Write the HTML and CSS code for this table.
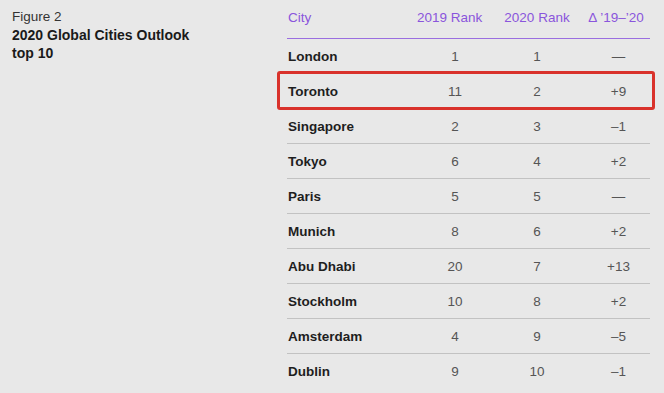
FILE: index.html
```html
<!DOCTYPE html>
<html>
<head>
<meta charset="utf-8">
<link rel="stylesheet" href="styles.css">
</head>
<body>
<div class="page">
  <div class="caption">
    <div class="fig">Figure 2</div>
    <div class="title">2020 Global Cities Outlook<br>top 10</div>
  </div>
  <div class="table">
    <div class="row head">
      <div class="city">City</div>
      <div class="c1">2019 Rank</div>
      <div class="c2">2020 Rank</div>
      <div class="c3">Δ ’19–’20</div>
    </div>
    <div class="row"><div class="city">London</div><div class="c1">1</div><div class="c2">1</div><div class="c3">—</div></div>
    <div class="row hl"><div class="city">Toronto</div><div class="c1">11</div><div class="c2">2</div><div class="c3">+9</div></div>
    <div class="row"><div class="city">Singapore</div><div class="c1">2</div><div class="c2">3</div><div class="c3">–1</div></div>
    <div class="row"><div class="city">Tokyo</div><div class="c1">6</div><div class="c2">4</div><div class="c3">+2</div></div>
    <div class="row"><div class="city">Paris</div><div class="c1">5</div><div class="c2">5</div><div class="c3">—</div></div>
    <div class="row"><div class="city">Munich</div><div class="c1">8</div><div class="c2">6</div><div class="c3">+2</div></div>
    <div class="row"><div class="city">Abu Dhabi</div><div class="c1">20</div><div class="c2">7</div><div class="c3">+13</div></div>
    <div class="row"><div class="city">Stockholm</div><div class="c1">10</div><div class="c2">8</div><div class="c3">+2</div></div>
    <div class="row"><div class="city">Amsterdam</div><div class="c1">4</div><div class="c2">9</div><div class="c3">–5</div></div>
    <div class="row last"><div class="city">Dublin</div><div class="c1">9</div><div class="c2">10</div><div class="c3">–1</div></div>
  </div>
</div>
</body>
</html>
```
FILE: styles.css
```css
html, body {
  margin: 0;
  padding: 0;
  background: #e8e8e8;
  width: 664px;
  height: 393px;
  overflow: hidden;
  font-family: "Liberation Sans", Arial, sans-serif;
}
.page {
  display: flex;
  height: 393px;
}
.caption {
  width: 275px;
  padding: 8px 0 0 12px;
  box-sizing: border-box;
}
.fig {
  font-size: 13.5px;
  line-height: 18px;
  color: #333;
}
.title {
  font-size: 14px;
  line-height: 18px;
  font-weight: 700;
  color: #1a1a1a;
}
.table {
  margin-left: 12px;
  width: 363px;
  display: flex;
  flex-direction: column;
}
.row {
  display: grid;
  grid-template-columns: 130px 76px 88px 69px;
  height: 34px;
  align-items: center;
  border-bottom: 1px solid #c2c2c2;
  position: relative;
  font-size: 13.5px;
  color: #555;
}
.row.head {
  height: 39px;
  box-sizing: border-box;
  padding-bottom: 3px;
  border-bottom: 1.5px solid #9a6ee0;
  color: #8a55dc;
}
.city {
  padding-left: 1px;
  font-weight: 700;
  color: #1e1e1e;
}
.row.head .city {
  font-weight: 400;
  color: #8a55dc;
}
.c1, .c2, .c3 {
  text-align: center;
}
.c3 {
  padding-left: 6px;
}
.row.head .c1 {
  padding-right: 12px;
  white-space: nowrap;
}
.row.head .c3 {
  padding-left: 1px;
  white-space: nowrap;
}
.row.last {
  border-bottom: none;
}
.row.hl::after {
  content: "";
  position: absolute;
  left: -10px;
  right: -5px;
  top: -3px;
  bottom: -2px;
  border: 3px solid #d9322b;
  border-radius: 3px;
}
```
